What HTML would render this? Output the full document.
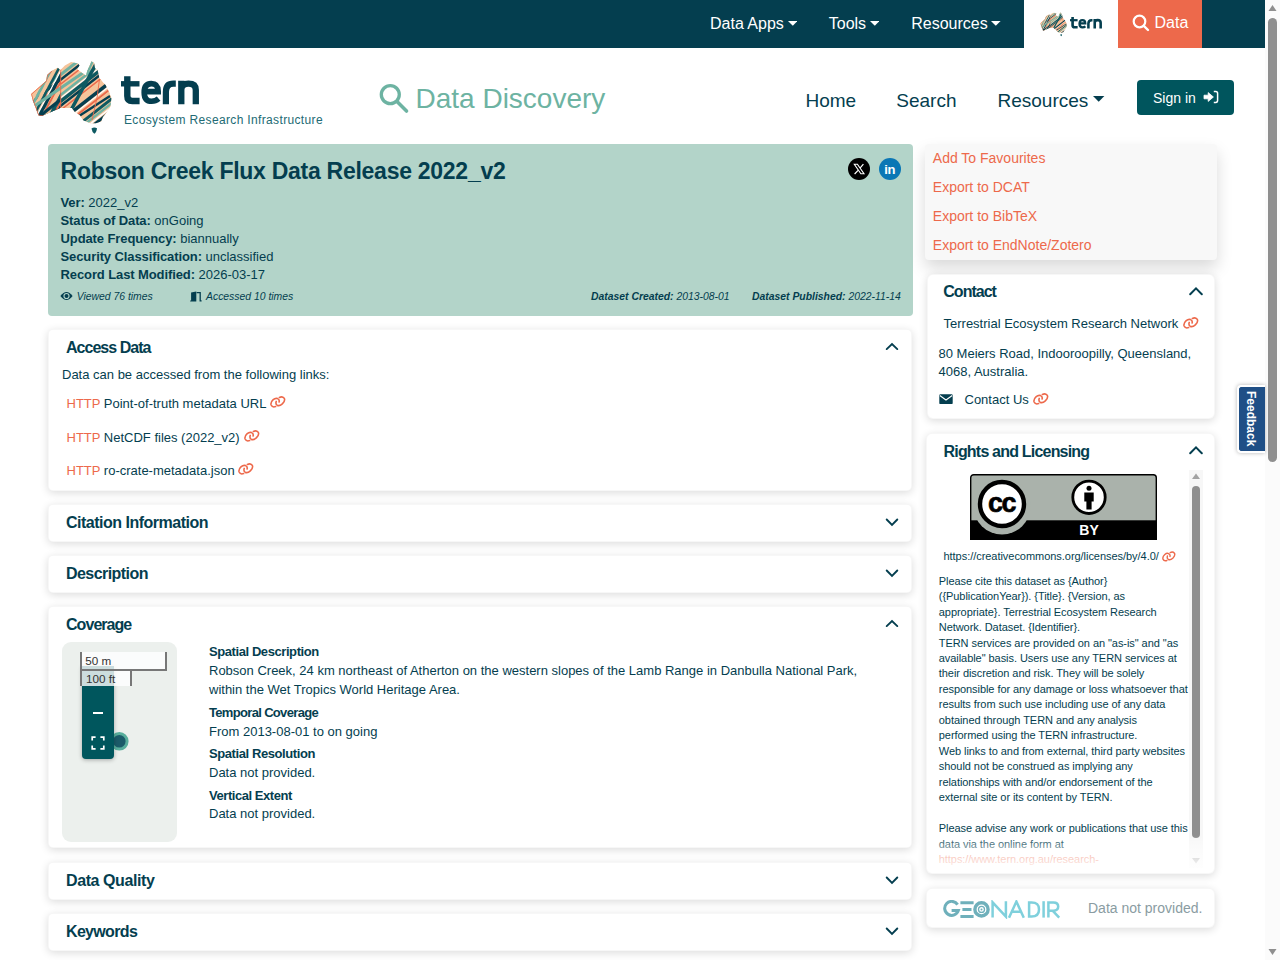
<!DOCTYPE html>
<html><head><meta charset="utf-8"><title>Robson Creek Flux Data Release 2022_v2</title>
<style>
html,body{margin:0;padding:0;width:1280px;height:960px;overflow:hidden;background:#fff;}
body{position:relative;font-family:"Liberation Sans",sans-serif;}
.t{position:absolute;white-space:nowrap;}
.r{position:absolute;display:block;}
</style></head><body>
<div class="r" style="left:0px;top:0px;width:1265px;height:48px;background:#043e4f"></div>
<div class="t" style="left:710.00px;top:16.46px;font-size:16px;line-height:16px;color:#fff;font-weight:400;font-style:normal;letter-spacing:0px;">Data Apps</div>
<svg class="r" style="left:787.5px;top:21.3px;" width="9.6" height="4.8" viewBox="0 0 9.6 4.8"><path d="M0 0H9.6L4.8 4.8Z" fill="#fff"/></svg>
<div class="t" style="left:828.75px;top:16.46px;font-size:16px;line-height:16px;color:#fff;font-weight:400;font-style:normal;letter-spacing:0px;">Tools</div>
<svg class="r" style="left:869.5px;top:21.3px;" width="9.6" height="4.8" viewBox="0 0 9.6 4.8"><path d="M0 0H9.6L4.8 4.8Z" fill="#fff"/></svg>
<div class="t" style="left:911.25px;top:16.46px;font-size:16px;line-height:16px;color:#fff;font-weight:400;font-style:normal;letter-spacing:0px;">Resources</div>
<svg class="r" style="left:991.25px;top:21.3px;" width="9.6" height="4.8" viewBox="0 0 9.6 4.8"><path d="M0 0H9.6L4.8 4.8Z" fill="#fff"/></svg>
<div class="r" style="left:1024px;top:0px;width:94px;height:48px;background:#fff"></div>
<div class="r" style="left:1118px;top:0px;width:84px;height:48px;background:#ed694b"></div>
<svg class="r" style="left:1132px;top:14px;" width="18" height="18" viewBox="0 0 18 18"><circle cx="7.5" cy="7.5" r="5.8" fill="none" stroke="#fff" stroke-width="2.2"/><line x1="11.8" y1="11.8" x2="16" y2="16" stroke="#fff" stroke-width="2.4" stroke-linecap="round"/></svg>
<div class="t" style="left:1154.50px;top:15.06px;font-size:16px;line-height:16px;color:#fff;font-weight:400;font-style:normal;letter-spacing:0px;">Data</div>
<div class="r" style="left:1265px;top:0px;width:15px;height:960px;background:#fbfbfb"></div>
<svg class="r" style="left:1265px;top:0px;" width="15" height="16" viewBox="0 0 15 16"><path d="M3.5 11L7.5 5L11.5 11Z" fill="#8f8f8f"/></svg>
<div class="r" style="left:1268px;top:18px;width:9px;height:444px;background:#8f8f8f;border-radius:4.5px"></div>
<svg class="r" style="left:1265px;top:944px;" width="15" height="16" viewBox="0 0 15 16"><path d="M3.5 5L7.5 11L11.5 5Z" fill="#8f8f8f"/></svg>
<svg class="r" style="left:120.5px;top:76px;" width="80" height="30" viewBox="0 0 80 30"><g fill="none" stroke="#043e4f" stroke-linecap="butt"><path d="M6.3 0.2V20Q6.3 25 11.3 25H18.6" stroke-width="6.4"/><path d="M0 7.8H18.5" stroke-width="5.4"/><path d="M23.5 15.6H37.2Q37.2 7.6 30.2 7.6Q23.2 7.6 23.2 16.4Q23.2 25.2 30.6 25.2Q34.6 25.2 37.6 22.6" stroke-width="5.6"/><path d="M44.9 28.2V16Q44.9 7.7 52.4 7.7H54.8" stroke-width="6.2"/><path d="M60.3 28.2V4.8M60.3 14Q60.3 7.7 67.5 7.7Q74.8 7.7 74.8 14V28.2" stroke-width="6.3"/></g></svg>
<div class="t" style="left:124.00px;top:113.84px;font-size:12px;line-height:12px;color:#226b74;font-weight:400;font-style:normal;letter-spacing:0.35px;">Ecosystem Research Infrastructure</div>
<svg class="r" style="left:376.5px;top:80.5px;" width="34" height="34" viewBox="0 0 34 34"><circle cx="13.3" cy="13.6" r="9" fill="none" stroke="#6db3a2" stroke-width="3.3"/><line x1="20" y1="20.5" x2="29.5" y2="30" stroke="#6db3a2" stroke-width="3.6" stroke-linecap="round"/></svg>
<div class="t" style="left:415.50px;top:84.80px;font-size:28px;line-height:28px;color:#6db3a2;font-weight:400;font-style:normal;letter-spacing:0px;">Data Discovery</div>
<div class="t" style="left:805.50px;top:90.72px;font-size:19px;line-height:19px;color:#043e4f;font-weight:400;font-style:normal;letter-spacing:0px;">Home</div>
<div class="t" style="left:896.30px;top:90.72px;font-size:19px;line-height:19px;color:#043e4f;font-weight:400;font-style:normal;letter-spacing:0px;">Search</div>
<div class="t" style="left:997.50px;top:90.72px;font-size:19px;line-height:19px;color:#043e4f;font-weight:400;font-style:normal;letter-spacing:0px;">Resources</div>
<svg class="r" style="left:1093.3px;top:96px;" width="11.4" height="5.7" viewBox="0 0 11.4 5.7"><path d="M0 0H11.4L5.7 5.7Z" fill="#043e4f"/></svg>
<div class="r" style="left:1137px;top:80px;width:97px;height:35px;background:#00555d;border-radius:4px"></div>
<div class="t" style="left:1153.00px;top:90.55px;font-size:14px;line-height:14px;color:#fff;font-weight:400;font-style:normal;letter-spacing:0px;">Sign in</div>
<svg class="r" style="left:1203px;top:90px;" width="16" height="14" viewBox="0 0 16 14"><path d="M1 5.2H5.2V2.6L10.4 7L5.2 11.4V8.8H1Z" fill="#fff" stroke="#fff" stroke-width="0.8" stroke-linejoin="round"/><path d="M10.8 1.6H12.8Q14.6 1.6 14.6 3.4V10.6Q14.6 12.4 12.8 12.4H10.8" fill="none" stroke="#fff" stroke-width="1.5"/></svg>
<div class="r" style="left:48px;top:144px;width:865px;height:172px;background:#b3d4c9;border-radius:4px"></div>
<div class="t" style="left:60.60px;top:159.53px;font-size:23px;line-height:23px;color:#043e4f;font-weight:700;font-style:normal;letter-spacing:-0.27px;">Robson Creek Flux Data Release 2022_v2</div>
<div class="r" style="left:848px;top:158px;width:22px;height:22px;background:#000;border-radius:50%"></div>
<div class="r" style="left:879px;top:158px;width:22px;height:22px;background:#0a77b5;border-radius:50%"></div>
<svg class="r" style="left:848px;top:158px;" width="22" height="22" viewBox="0 0 22 22"><path d="M6.3 6.2H9.4L16 15.8H12.9Z" fill="none" stroke="#fff" stroke-width="1.1"/><path d="M15.4 6.2L12.2 9.9M10.1 12.3L6.6 16" stroke="#fff" stroke-width="1.2"/></svg>
<div class="t" style="left:884.20px;top:162.80px;font-size:13px;line-height:13px;color:#fff;font-weight:700;font-style:normal;letter-spacing:-0.2px;">in</div>
<div class="t" style="left:60.50px;top:196.00px;font-size:13px;line-height:13px;color:#043e4f;font-weight:400;font-style:normal;letter-spacing:0px;"><b style="letter-spacing:-0.1px">Ver:</b> 2022_v2</div>
<div class="t" style="left:60.50px;top:214.00px;font-size:13px;line-height:13px;color:#043e4f;font-weight:400;font-style:normal;letter-spacing:0px;"><b style="letter-spacing:-0.1px">Status of Data:</b> onGoing</div>
<div class="t" style="left:60.50px;top:232.00px;font-size:13px;line-height:13px;color:#043e4f;font-weight:400;font-style:normal;letter-spacing:0px;"><b style="letter-spacing:-0.1px">Update Frequency:</b> biannually</div>
<div class="t" style="left:60.50px;top:250.00px;font-size:13px;line-height:13px;color:#043e4f;font-weight:400;font-style:normal;letter-spacing:0px;"><b style="letter-spacing:-0.1px">Security Classification:</b> unclassified</div>
<div class="t" style="left:60.50px;top:268.00px;font-size:13px;line-height:13px;color:#043e4f;font-weight:400;font-style:normal;letter-spacing:0px;"><b style="letter-spacing:-0.1px">Record Last Modified:</b> 2026-03-17</div>
<div class="t" style="left:76.70px;top:291.50px;font-size:10.4px;line-height:10.4px;color:#043e4f;font-weight:400;font-style:italic;letter-spacing:0px;">Viewed 76 times</div>
<svg class="r" style="left:59.5px;top:291px;" width="13" height="10" viewBox="0 0 13 10"><path d="M0.4 5Q6.5 -3.2 12.6 5Q6.5 13.2 0.4 5Z" fill="#043e4f"/><circle cx="6.5" cy="5" r="3.1" fill="#b3d4c9"/><circle cx="6.5" cy="5.1" r="2" fill="#043e4f"/></svg>
<svg class="r" style="left:190px;top:290.5px;" width="12" height="11" viewBox="0 0 12 11"><path d="M0.2 10.4H6.3V0.6L1.1 1.6V9.6H0.2Z" fill="#043e4f"/><path d="M6.6 1.6H10.2V9.8H11.6" fill="none" stroke="#043e4f" stroke-width="1.3"/></svg>
<div class="t" style="left:206.00px;top:291.50px;font-size:10.4px;line-height:10.4px;color:#043e4f;font-weight:400;font-style:italic;letter-spacing:0px;">Accessed 10 times</div>
<div class="t" style="left:591.00px;top:291.70px;font-size:10.4px;line-height:10.4px;color:#043e4f;font-weight:400;font-style:italic;letter-spacing:0px;"><b>Dataset Created:</b> 2013-08-01</div>
<div class="t" style="left:752.00px;top:291.70px;font-size:10.4px;line-height:10.4px;color:#043e4f;font-weight:400;font-style:italic;letter-spacing:0px;"><b>Dataset Published:</b> 2022-11-14</div>
<div class="r" style="left:48px;top:329px;width:864px;height:162px;background:#fff;border-radius:5px;border:1px solid rgba(0,0,0,0.03);box-sizing:border-box;box-shadow:0 2px 8px rgba(0,0,0,0.14)"></div>
<div class="t" style="left:66.00px;top:339.76px;font-size:16px;line-height:16px;color:#043e4f;font-weight:700;font-style:normal;letter-spacing:-0.98px;">Access Data</div>
<svg class="r" style="left:885px;top:340px;" width="14" height="11" viewBox="0 0 14 11"><path d="M1.7 9.1L7 4L12.3 9.1" fill="none" stroke="#043e4f" stroke-width="1.9" stroke-linecap="round"/></svg>
<div class="r" style="left:48px;top:504px;width:864px;height:38px;background:#fff;border-radius:5px;border:1px solid rgba(0,0,0,0.03);box-sizing:border-box;box-shadow:0 2px 8px rgba(0,0,0,0.14)"></div>
<div class="t" style="left:66.00px;top:514.76px;font-size:16px;line-height:16px;color:#043e4f;font-weight:700;font-style:normal;letter-spacing:-0.5px;">Citation Information</div>
<svg class="r" style="left:885px;top:517px;" width="14" height="10" viewBox="0 0 14 10"><path d="M1.7 2.5L7 7.8L12.3 2.5" fill="none" stroke="#043e4f" stroke-width="1.9" stroke-linecap="round"/></svg>
<div class="r" style="left:48px;top:555px;width:864px;height:38px;background:#fff;border-radius:5px;border:1px solid rgba(0,0,0,0.03);box-sizing:border-box;box-shadow:0 2px 8px rgba(0,0,0,0.14)"></div>
<div class="t" style="left:66.00px;top:565.76px;font-size:16px;line-height:16px;color:#043e4f;font-weight:700;font-style:normal;letter-spacing:-0.55px;">Description</div>
<svg class="r" style="left:885px;top:568px;" width="14" height="10" viewBox="0 0 14 10"><path d="M1.7 2.5L7 7.8L12.3 2.5" fill="none" stroke="#043e4f" stroke-width="1.9" stroke-linecap="round"/></svg>
<div class="r" style="left:48px;top:606px;width:864px;height:242px;background:#fff;border-radius:5px;border:1px solid rgba(0,0,0,0.03);box-sizing:border-box;box-shadow:0 2px 8px rgba(0,0,0,0.14)"></div>
<div class="t" style="left:66.00px;top:616.76px;font-size:16px;line-height:16px;color:#043e4f;font-weight:700;font-style:normal;letter-spacing:-0.95px;">Coverage</div>
<svg class="r" style="left:885px;top:617px;" width="14" height="11" viewBox="0 0 14 11"><path d="M1.7 9.1L7 4L12.3 9.1" fill="none" stroke="#043e4f" stroke-width="1.9" stroke-linecap="round"/></svg>
<div class="r" style="left:48px;top:862px;width:864px;height:38px;background:#fff;border-radius:5px;border:1px solid rgba(0,0,0,0.03);box-sizing:border-box;box-shadow:0 2px 8px rgba(0,0,0,0.14)"></div>
<div class="t" style="left:66.00px;top:872.76px;font-size:16px;line-height:16px;color:#043e4f;font-weight:700;font-style:normal;letter-spacing:-0.41px;">Data Quality</div>
<svg class="r" style="left:885px;top:875px;" width="14" height="10" viewBox="0 0 14 10"><path d="M1.7 2.5L7 7.8L12.3 2.5" fill="none" stroke="#043e4f" stroke-width="1.9" stroke-linecap="round"/></svg>
<div class="r" style="left:48px;top:913px;width:864px;height:38px;background:#fff;border-radius:5px;border:1px solid rgba(0,0,0,0.03);box-sizing:border-box;box-shadow:0 2px 8px rgba(0,0,0,0.14)"></div>
<div class="t" style="left:66.00px;top:923.76px;font-size:16px;line-height:16px;color:#043e4f;font-weight:700;font-style:normal;letter-spacing:-0.67px;">Keywords</div>
<svg class="r" style="left:885px;top:926px;" width="14" height="10" viewBox="0 0 14 10"><path d="M1.7 2.5L7 7.8L12.3 2.5" fill="none" stroke="#043e4f" stroke-width="1.9" stroke-linecap="round"/></svg>
<div class="t" style="left:62.00px;top:368.00px;font-size:13px;line-height:13px;color:#043e4f;font-weight:400;font-style:normal;letter-spacing:0px;">Data can be accessed from the following links:</div>
<div class="t" style="left:66.50px;top:397.30px;font-size:13px;line-height:13px;color:#043e4f;font-weight:400;font-style:normal;letter-spacing:0px;"><span style="color:#ed694b">HTTP</span> Point-of-truth metadata URL</div>
<div class="t" style="left:66.50px;top:430.50px;font-size:13px;line-height:13px;color:#043e4f;font-weight:400;font-style:normal;letter-spacing:0px;"><span style="color:#ed694b">HTTP</span> NetCDF files (2022_v2)</div>
<div class="t" style="left:66.50px;top:463.70px;font-size:13px;line-height:13px;color:#043e4f;font-weight:400;font-style:normal;letter-spacing:0px;"><span style="color:#ed694b">HTTP</span> ro-crate-metadata.json</div>
<div class="r" style="left:62px;top:642px;width:115px;height:200px;background:#ecf0ed;border-radius:9px"></div>
<div class="t" style="left:209.00px;top:645.00px;font-size:13px;line-height:13px;color:#043e4f;font-weight:700;font-style:normal;letter-spacing:-0.42px;">Spatial Description</div>
<div class="t" style="left:209.00px;top:664.00px;font-size:13px;line-height:13px;color:#043e4f;font-weight:400;font-style:normal;letter-spacing:0px;">Robson Creek, 24 km northeast of Atherton on the western slopes of the Lamb Range in Danbulla National Park,</div>
<div class="t" style="left:209.00px;top:683.00px;font-size:13px;line-height:13px;color:#043e4f;font-weight:400;font-style:normal;letter-spacing:0px;">within the Wet Tropics World Heritage Area.</div>
<div class="t" style="left:209.00px;top:705.50px;font-size:13px;line-height:13px;color:#043e4f;font-weight:700;font-style:normal;letter-spacing:-0.67px;">Temporal Coverage</div>
<div class="t" style="left:209.00px;top:724.50px;font-size:13px;line-height:13px;color:#043e4f;font-weight:400;font-style:normal;letter-spacing:0px;">From 2013-08-01 to on going</div>
<div class="t" style="left:209.00px;top:746.50px;font-size:13px;line-height:13px;color:#043e4f;font-weight:700;font-style:normal;letter-spacing:-0.41px;">Spatial Resolution</div>
<div class="t" style="left:209.00px;top:766.00px;font-size:13px;line-height:13px;color:#043e4f;font-weight:400;font-style:normal;letter-spacing:0px;">Data not provided.</div>
<div class="t" style="left:209.00px;top:788.50px;font-size:13px;line-height:13px;color:#043e4f;font-weight:700;font-style:normal;letter-spacing:-0.45px;">Vertical Extent</div>
<div class="t" style="left:209.00px;top:807.00px;font-size:13px;line-height:13px;color:#043e4f;font-weight:400;font-style:normal;letter-spacing:0px;">Data not provided.</div>
<div class="r" style="left:925px;top:144px;width:292px;height:116px;background:#f8f8f8;border-radius:4px;box-shadow:0 8px 16px rgba(0,0,0,0.15)"></div>
<div class="t" style="left:932.80px;top:151.15px;font-size:14px;line-height:14px;color:#ed694b;font-weight:400;font-style:normal;letter-spacing:0px;">Add To Favourites</div>
<div class="t" style="left:932.80px;top:180.15px;font-size:14px;line-height:14px;color:#ed694b;font-weight:400;font-style:normal;letter-spacing:0px;">Export to DCAT</div>
<div class="t" style="left:932.80px;top:209.15px;font-size:14px;line-height:14px;color:#ed694b;font-weight:400;font-style:normal;letter-spacing:0px;">Export to BibTeX</div>
<div class="t" style="left:932.80px;top:238.15px;font-size:14px;line-height:14px;color:#ed694b;font-weight:400;font-style:normal;letter-spacing:0px;">Export to EndNote/Zotero</div>
<div class="r" style="left:927px;top:274px;width:288px;height:145px;background:#fff;border-radius:6px;border:1px solid rgba(0,0,0,0.03);box-sizing:border-box;box-shadow:0 2px 8px rgba(0,0,0,0.14)"></div>
<div class="t" style="left:943.30px;top:283.86px;font-size:16px;line-height:16px;color:#043e4f;font-weight:700;font-style:normal;letter-spacing:-1.0px;">Contact</div>
<svg class="r" style="left:1189px;top:285.5px;" width="14" height="10" viewBox="0 0 14 10"><path d="M1.2 8.2L7 2.4L12.8 8.2" fill="none" stroke="#043e4f" stroke-width="2" stroke-linecap="round"/></svg>
<div class="t" style="left:943.50px;top:317.00px;font-size:13px;line-height:13px;color:#043e4f;font-weight:400;font-style:normal;letter-spacing:0px;">Terrestrial Ecosystem Research Network</div>
<div class="t" style="left:938.50px;top:346.80px;font-size:13px;line-height:13px;color:#043e4f;font-weight:400;font-style:normal;letter-spacing:0px;">80 Meiers Road, Indooroopilly, Queensland,</div>
<div class="t" style="left:938.50px;top:364.80px;font-size:13px;line-height:13px;color:#043e4f;font-weight:400;font-style:normal;letter-spacing:0px;">4068, Australia.</div>
<div class="t" style="left:964.50px;top:393.00px;font-size:13px;line-height:13px;color:#043e4f;font-weight:400;font-style:normal;letter-spacing:0px;">Contact Us</div>
<div class="r" style="left:926px;top:433px;width:289px;height:441px;background:#fff;border-radius:6px;border:1px solid rgba(0,0,0,0.03);box-sizing:border-box;box-shadow:0 2px 8px rgba(0,0,0,0.14)"></div>
<div class="t" style="left:943.50px;top:444.46px;font-size:16px;line-height:16px;color:#043e4f;font-weight:700;font-style:normal;letter-spacing:-0.8px;">Rights and Licensing</div>
<svg class="r" style="left:1189px;top:445.3px;" width="14" height="10" viewBox="0 0 14 10"><path d="M1.2 8.2L7 2.4L12.8 8.2" fill="none" stroke="#043e4f" stroke-width="2" stroke-linecap="round"/></svg>
<div class="t" style="left:943.50px;top:551.49px;font-size:11px;line-height:11px;color:#043e4f;font-weight:400;font-style:normal;letter-spacing:-0.04px;">https://creativecommons.org/licenses/by/4.0/</div>
<div class="t" style="left:938.80px;top:575.59px;font-size:11px;line-height:11px;color:#043e4f;font-weight:400;font-style:normal;letter-spacing:-0.06px;">Please cite this dataset as {Author}</div>
<div class="t" style="left:938.80px;top:591.07px;font-size:11px;line-height:11px;color:#043e4f;font-weight:400;font-style:normal;letter-spacing:-0.06px;">({PublicationYear}). {Title}. {Version, as</div>
<div class="t" style="left:938.80px;top:606.55px;font-size:11px;line-height:11px;color:#043e4f;font-weight:400;font-style:normal;letter-spacing:-0.06px;">appropriate}. Terrestrial Ecosystem Research</div>
<div class="t" style="left:938.80px;top:622.03px;font-size:11px;line-height:11px;color:#043e4f;font-weight:400;font-style:normal;letter-spacing:-0.06px;">Network. Dataset. {Identifier}.</div>
<div class="t" style="left:938.80px;top:637.51px;font-size:11px;line-height:11px;color:#043e4f;font-weight:400;font-style:normal;letter-spacing:-0.06px;">TERN services are provided on an &quot;as-is&quot; and &quot;as</div>
<div class="t" style="left:938.80px;top:652.99px;font-size:11px;line-height:11px;color:#043e4f;font-weight:400;font-style:normal;letter-spacing:-0.06px;">available&quot; basis. Users use any TERN services at</div>
<div class="t" style="left:938.80px;top:668.47px;font-size:11px;line-height:11px;color:#043e4f;font-weight:400;font-style:normal;letter-spacing:-0.06px;">their discretion and risk. They will be solely</div>
<div class="t" style="left:938.80px;top:683.95px;font-size:11px;line-height:11px;color:#043e4f;font-weight:400;font-style:normal;letter-spacing:-0.06px;">responsible for any damage or loss whatsoever that</div>
<div class="t" style="left:938.80px;top:699.43px;font-size:11px;line-height:11px;color:#043e4f;font-weight:400;font-style:normal;letter-spacing:-0.06px;">results from such use including use of any data</div>
<div class="t" style="left:938.80px;top:714.91px;font-size:11px;line-height:11px;color:#043e4f;font-weight:400;font-style:normal;letter-spacing:-0.06px;">obtained through TERN and any analysis</div>
<div class="t" style="left:938.80px;top:730.39px;font-size:11px;line-height:11px;color:#043e4f;font-weight:400;font-style:normal;letter-spacing:-0.06px;">performed using the TERN infrastructure.</div>
<div class="t" style="left:938.80px;top:745.87px;font-size:11px;line-height:11px;color:#043e4f;font-weight:400;font-style:normal;letter-spacing:-0.06px;">Web links to and from external, third party websites</div>
<div class="t" style="left:938.80px;top:761.35px;font-size:11px;line-height:11px;color:#043e4f;font-weight:400;font-style:normal;letter-spacing:-0.06px;">should not be construed as implying any</div>
<div class="t" style="left:938.80px;top:776.83px;font-size:11px;line-height:11px;color:#043e4f;font-weight:400;font-style:normal;letter-spacing:-0.06px;">relationships with and/or endorsement of the</div>
<div class="t" style="left:938.80px;top:792.31px;font-size:11px;line-height:11px;color:#043e4f;font-weight:400;font-style:normal;letter-spacing:-0.06px;">external site or its content by TERN.</div>
<div class="t" style="left:938.80px;top:823.27px;font-size:11px;line-height:11px;color:#043e4f;font-weight:400;font-style:normal;letter-spacing:-0.06px;">Please advise any work or publications that use this</div>
<div class="t" style="left:938.80px;top:838.75px;font-size:11px;line-height:11px;color:#043e4f;font-weight:400;font-style:normal;letter-spacing:-0.06px;">data via the online form at</div>
<div class="t" style="left:938.80px;top:854.23px;font-size:11px;line-height:11px;color:#ed694b;font-weight:400;font-style:normal;letter-spacing:-0.06px;">https://www.tern.org.au/research-</div>
<div class="r" style="left:926px;top:888px;width:289px;height:40px;background:#fff;border-radius:6px;border:1px solid rgba(0,0,0,0.03);box-sizing:border-box;box-shadow:0 2px 8px rgba(0,0,0,0.14)"></div>
<div class="t" style="left:1088.00px;top:900.85px;font-size:14px;line-height:14px;color:#8a9ca2;font-weight:400;font-style:normal;letter-spacing:0px;">Data not provided.</div>
<div class="r" style="left:1237px;top:384.5px;width:28px;height:68px;background:#1f4f86;border:2px solid #fff;border-right:none;border-radius:4px 0 0 4px;box-sizing:border-box;box-shadow:0 0 4px rgba(0,0,0,0.3)"></div>
<div class="t" style="left:1243px;top:391px;width:16px;font-size:12px;line-height:16px;font-weight:700;color:#fff;writing-mode:vertical-rl;">Feedback</div>
<svg class="r" style="left:30px;top:60px;" width="82" height="76" viewBox="0 0 82 76"><defs><clipPath id="aubig"><path d="M1.2 34.0 L16.3 20.7 L17.1 14.9 L21.6 10.9 L27.8 7.8 L30.4 10.1 L34.9 5.6 L41.1 2.1 L48.1 3.4 L49.5 5.6 L47.3 9.2 L51.7 12.7 L56.1 15.4 L57.0 11.8 L59.7 5.6 L61.4 1.2 L64.1 3.0 L65.0 8.3 L67.6 10.1 L69.4 18.0 L72.9 22.5 L75.6 25.1 L79.1 32.2 L81.4 38.4 L80.5 46.4 L76.5 52.6 L72.9 57.0 L71.2 61.4 L65.9 63.2 L60.5 63.2 L53.5 60.5 L49.9 55.2 L44.6 51.7 L41.9 48.1 L30.4 48.1 L21.6 51.7 L11.8 56.1 L8.3 55.2 L6.5 49.9 L3.0 41.1Z"/></clipPath></defs><g clip-path="url(#aubig)"><rect width="82" height="66" fill="#f5c49b"/><line x1="-21.6" y1="55.5" x2="88.7" y2="-30.7" stroke="#6fb2a2" stroke-width="3"/><line x1="-19.2" y1="58.6" x2="91.2" y2="-27.6" stroke="#053f50" stroke-width="2.5"/><line x1="-17.0" y1="61.4" x2="93.3" y2="-24.8" stroke="#ec6a4b" stroke-width="1.5"/><line x1="-14.2" y1="64.9" x2="96.1" y2="-21.3" stroke="#f5c49b" stroke-width="5"/><line x1="-11.8" y1="68.1" x2="98.5" y2="-18.1" stroke="#6fb2a2" stroke-width="2.5"/><line x1="-10.2" y1="70.0" x2="100.1" y2="-16.2" stroke="#ffffff" stroke-width="1.2"/><line x1="-8.7" y1="72.0" x2="101.6" y2="-14.2" stroke="#0e5a62" stroke-width="3.5"/><line x1="-6.5" y1="74.8" x2="103.8" y2="-11.4" stroke="#053f50" stroke-width="2.5"/><line x1="-4.4" y1="77.5" x2="105.9" y2="-8.7" stroke="#ec6a4b" stroke-width="1.5"/><line x1="-1.9" y1="80.7" x2="108.4" y2="-5.5" stroke="#f5c49b" stroke-width="6"/><line x1="0.8" y1="84.2" x2="111.2" y2="-2.0" stroke="#053f50" stroke-width="3.5"/><line x1="2.5" y1="86.3" x2="112.8" y2="0.2" stroke="#ffffff" stroke-width="1.2"/><line x1="4.2" y1="88.6" x2="114.5" y2="2.4" stroke="#ec6a4b" stroke-width="2"/><line x1="6.7" y1="91.7" x2="117.0" y2="5.5" stroke="#f5c49b" stroke-width="6"/><line x1="9.5" y1="95.3" x2="119.8" y2="9.1" stroke="#0e5a62" stroke-width="3"/><line x1="11.6" y1="98.0" x2="121.9" y2="11.8" stroke="#6fb2a2" stroke-width="2.5"/><line x1="13.5" y1="100.4" x2="123.8" y2="14.2" stroke="#ffffff" stroke-width="1.5"/><line x1="15.3" y1="102.7" x2="125.6" y2="16.5" stroke="#053f50" stroke-width="3"/><line x1="17.8" y1="105.9" x2="128.1" y2="19.7" stroke="#6fb2a2" stroke-width="3"/><clipPath id="wbig"><rect x="0" y="0" width="31" height="76"/></clipPath><g clip-path="url(#wbig)"><line x1="-29.0" y1="86.3" x2="36.7" y2="-37.3" stroke="#ec6a4b" stroke-width="2"/><line x1="-25.5" y1="88.2" x2="40.3" y2="-35.4" stroke="#f5c49b" stroke-width="6"/><line x1="-21.5" y1="90.3" x2="44.2" y2="-33.3" stroke="#6fb2a2" stroke-width="2.5"/><line x1="-18.8" y1="91.7" x2="46.9" y2="-31.9" stroke="#f5c49b" stroke-width="3.5"/><line x1="-16.2" y1="93.1" x2="49.5" y2="-30.5" stroke="#0e5a62" stroke-width="2.5"/><line x1="-13.8" y1="94.4" x2="51.9" y2="-29.2" stroke="#ffffff" stroke-width="1.2"/><line x1="-11.8" y1="95.4" x2="54.0" y2="-28.2" stroke="#053f50" stroke-width="3"/><line x1="-9.1" y1="96.9" x2="56.6" y2="-26.8" stroke="#ec6a4b" stroke-width="2"/><line x1="-6.5" y1="98.3" x2="59.3" y2="-25.3" stroke="#f5c49b" stroke-width="4"/><line x1="-3.4" y1="99.9" x2="62.3" y2="-23.7" stroke="#0e5a62" stroke-width="3"/><line x1="-0.7" y1="101.3" x2="65.0" y2="-22.3" stroke="#ec6a4b" stroke-width="2"/><line x1="1.9" y1="102.7" x2="67.6" y2="-20.9" stroke="#053f50" stroke-width="4"/></g><line x1="3" y1="47" x2="60" y2="8" stroke="#6fb2a2" stroke-width="3.2"/><line x1="40" y1="52" x2="66" y2="4" stroke="#0e5a62" stroke-width="3.6"/><line x1="56" y1="14" x2="63" y2="0" stroke="#6fb2a2" stroke-width="3"/><line x1="46" y1="58" x2="80" y2="36" stroke="#053f50" stroke-width="2.4"/><line x1="10" y1="56" x2="30" y2="40" stroke="#053f50" stroke-width="3"/><path d="M30.7 9V49" stroke="#ec6a4b" stroke-width="0.9" fill="none"/><path d="M69.5 19L67 38L62 60" stroke="#ec6a4b" stroke-width="0.9" fill="none"/><path d="M1.2 34.0 L16.3 20.7 L17.1 14.9 L21.6 10.9 L27.8 7.8 L30.4 10.1 L34.9 5.6 L41.1 2.1 L48.1 3.4 L49.5 5.6 L47.3 9.2 L51.7 12.7 L56.1 15.4 L57.0 11.8 L59.7 5.6 L61.4 1.2 L64.1 3.0 L65.0 8.3 L67.6 10.1 L69.4 18.0 L72.9 22.5 L75.6 25.1 L79.1 32.2 L81.4 38.4 L80.5 46.4 L76.5 52.6 L72.9 57.0 L71.2 61.4 L65.9 63.2 L60.5 63.2 L53.5 60.5 L49.9 55.2 L44.6 51.7 L41.9 48.1 L30.4 48.1 L21.6 51.7 L11.8 56.1 L8.3 55.2 L6.5 49.9 L3.0 41.1Z" fill="none" stroke="#ec6a4b" stroke-width="1.4" stroke-dasharray="32 200"/></g><path d="M61.5 68.5 Q64 66.8 67 68.2 Q66.5 72.5 64.3 73.8 Q62 72 61.5 68.5Z" fill="#0e5a62"/></svg>
<svg class="r" style="left:1040px;top:11.7px;" width="27" height="25" viewBox="0 0 82 76"><defs><clipPath id="ausmall"><path d="M1.2 34.0 L16.3 20.7 L17.1 14.9 L21.6 10.9 L27.8 7.8 L30.4 10.1 L34.9 5.6 L41.1 2.1 L48.1 3.4 L49.5 5.6 L47.3 9.2 L51.7 12.7 L56.1 15.4 L57.0 11.8 L59.7 5.6 L61.4 1.2 L64.1 3.0 L65.0 8.3 L67.6 10.1 L69.4 18.0 L72.9 22.5 L75.6 25.1 L79.1 32.2 L81.4 38.4 L80.5 46.4 L76.5 52.6 L72.9 57.0 L71.2 61.4 L65.9 63.2 L60.5 63.2 L53.5 60.5 L49.9 55.2 L44.6 51.7 L41.9 48.1 L30.4 48.1 L21.6 51.7 L11.8 56.1 L8.3 55.2 L6.5 49.9 L3.0 41.1Z"/></clipPath></defs><g clip-path="url(#ausmall)"><rect width="82" height="66" fill="#f5c49b"/><line x1="-21.6" y1="55.5" x2="88.7" y2="-30.7" stroke="#6fb2a2" stroke-width="3"/><line x1="-19.2" y1="58.6" x2="91.2" y2="-27.6" stroke="#053f50" stroke-width="2.5"/><line x1="-17.0" y1="61.4" x2="93.3" y2="-24.8" stroke="#ec6a4b" stroke-width="1.5"/><line x1="-14.2" y1="64.9" x2="96.1" y2="-21.3" stroke="#f5c49b" stroke-width="5"/><line x1="-11.8" y1="68.1" x2="98.5" y2="-18.1" stroke="#6fb2a2" stroke-width="2.5"/><line x1="-10.2" y1="70.0" x2="100.1" y2="-16.2" stroke="#ffffff" stroke-width="1.2"/><line x1="-8.7" y1="72.0" x2="101.6" y2="-14.2" stroke="#0e5a62" stroke-width="3.5"/><line x1="-6.5" y1="74.8" x2="103.8" y2="-11.4" stroke="#053f50" stroke-width="2.5"/><line x1="-4.4" y1="77.5" x2="105.9" y2="-8.7" stroke="#ec6a4b" stroke-width="1.5"/><line x1="-1.9" y1="80.7" x2="108.4" y2="-5.5" stroke="#f5c49b" stroke-width="6"/><line x1="0.8" y1="84.2" x2="111.2" y2="-2.0" stroke="#053f50" stroke-width="3.5"/><line x1="2.5" y1="86.3" x2="112.8" y2="0.2" stroke="#ffffff" stroke-width="1.2"/><line x1="4.2" y1="88.6" x2="114.5" y2="2.4" stroke="#ec6a4b" stroke-width="2"/><line x1="6.7" y1="91.7" x2="117.0" y2="5.5" stroke="#f5c49b" stroke-width="6"/><line x1="9.5" y1="95.3" x2="119.8" y2="9.1" stroke="#0e5a62" stroke-width="3"/><line x1="11.6" y1="98.0" x2="121.9" y2="11.8" stroke="#6fb2a2" stroke-width="2.5"/><line x1="13.5" y1="100.4" x2="123.8" y2="14.2" stroke="#ffffff" stroke-width="1.5"/><line x1="15.3" y1="102.7" x2="125.6" y2="16.5" stroke="#053f50" stroke-width="3"/><line x1="17.8" y1="105.9" x2="128.1" y2="19.7" stroke="#6fb2a2" stroke-width="3"/><clipPath id="wsmall"><rect x="0" y="0" width="31" height="76"/></clipPath><g clip-path="url(#wsmall)"><line x1="-29.0" y1="86.3" x2="36.7" y2="-37.3" stroke="#ec6a4b" stroke-width="2"/><line x1="-25.5" y1="88.2" x2="40.3" y2="-35.4" stroke="#f5c49b" stroke-width="6"/><line x1="-21.5" y1="90.3" x2="44.2" y2="-33.3" stroke="#6fb2a2" stroke-width="2.5"/><line x1="-18.8" y1="91.7" x2="46.9" y2="-31.9" stroke="#f5c49b" stroke-width="3.5"/><line x1="-16.2" y1="93.1" x2="49.5" y2="-30.5" stroke="#0e5a62" stroke-width="2.5"/><line x1="-13.8" y1="94.4" x2="51.9" y2="-29.2" stroke="#ffffff" stroke-width="1.2"/><line x1="-11.8" y1="95.4" x2="54.0" y2="-28.2" stroke="#053f50" stroke-width="3"/><line x1="-9.1" y1="96.9" x2="56.6" y2="-26.8" stroke="#ec6a4b" stroke-width="2"/><line x1="-6.5" y1="98.3" x2="59.3" y2="-25.3" stroke="#f5c49b" stroke-width="4"/><line x1="-3.4" y1="99.9" x2="62.3" y2="-23.7" stroke="#0e5a62" stroke-width="3"/><line x1="-0.7" y1="101.3" x2="65.0" y2="-22.3" stroke="#ec6a4b" stroke-width="2"/><line x1="1.9" y1="102.7" x2="67.6" y2="-20.9" stroke="#053f50" stroke-width="4"/></g><line x1="3" y1="47" x2="60" y2="8" stroke="#6fb2a2" stroke-width="3.2"/><line x1="40" y1="52" x2="66" y2="4" stroke="#0e5a62" stroke-width="3.6"/><line x1="56" y1="14" x2="63" y2="0" stroke="#6fb2a2" stroke-width="3"/><line x1="46" y1="58" x2="80" y2="36" stroke="#053f50" stroke-width="2.4"/><line x1="10" y1="56" x2="30" y2="40" stroke="#053f50" stroke-width="3"/><path d="M30.7 9V49" stroke="#ec6a4b" stroke-width="0.9" fill="none"/><path d="M69.5 19L67 38L62 60" stroke="#ec6a4b" stroke-width="0.9" fill="none"/><path d="M1.2 34.0 L16.3 20.7 L17.1 14.9 L21.6 10.9 L27.8 7.8 L30.4 10.1 L34.9 5.6 L41.1 2.1 L48.1 3.4 L49.5 5.6 L47.3 9.2 L51.7 12.7 L56.1 15.4 L57.0 11.8 L59.7 5.6 L61.4 1.2 L64.1 3.0 L65.0 8.3 L67.6 10.1 L69.4 18.0 L72.9 22.5 L75.6 25.1 L79.1 32.2 L81.4 38.4 L80.5 46.4 L76.5 52.6 L72.9 57.0 L71.2 61.4 L65.9 63.2 L60.5 63.2 L53.5 60.5 L49.9 55.2 L44.6 51.7 L41.9 48.1 L30.4 48.1 L21.6 51.7 L11.8 56.1 L8.3 55.2 L6.5 49.9 L3.0 41.1Z" fill="none" stroke="#ec6a4b" stroke-width="1.4" stroke-dasharray="32 200"/></g><path d="M61.5 68.5 Q64 66.8 67 68.2 Q66.5 72.5 64.3 73.8 Q62 72 61.5 68.5Z" fill="#0e5a62"/></svg>
<svg class="r" style="left:1070.2px;top:17.3px;" width="33" height="12.5" viewBox="0 0 80.5 30.5"><g fill="none" stroke="#043e4f" stroke-linecap="butt"><path d="M6.3 0.2V20Q6.3 25 11.3 25H18.6" stroke-width="6.4"/><path d="M0 7.8H18.5" stroke-width="5.4"/><path d="M23.5 15.6H37.2Q37.2 7.6 30.2 7.6Q23.2 7.6 23.2 16.4Q23.2 25.2 30.6 25.2Q34.6 25.2 37.6 22.6" stroke-width="5.6"/><path d="M44.9 28.2V16Q44.9 7.7 52.4 7.7H54.8" stroke-width="6.2"/><path d="M60.3 28.2V4.8M60.3 14Q60.3 7.7 67.5 7.7Q74.8 7.7 74.8 14V28.2" stroke-width="6.3"/></g></svg>
<svg class="r" style="left:270px;top:396.4px;" width="16" height="12" viewBox="0 0 16 12"><g fill="none" stroke="#ed694b" stroke-width="1.6" stroke-linecap="round"><path d="M5.6 10.6Q2.4 11.8 1.1 9Q0.3 6.4 3.2 3.7Q5.5 1.7 7.6 2.6Q9.8 3.8 9.1 5.9"/><path d="M9.4 1.5Q12.2 -0.1 14.2 2.2Q15.6 4.5 12.3 7.9Q9.7 10.3 7.3 9.4Q5.3 8.3 6.2 5.4"/></g></svg>
<svg class="r" style="left:243.8px;top:430px;" width="16" height="12" viewBox="0 0 16 12"><g fill="none" stroke="#ed694b" stroke-width="1.6" stroke-linecap="round"><path d="M5.6 10.6Q2.4 11.8 1.1 9Q0.3 6.4 3.2 3.7Q5.5 1.7 7.6 2.6Q9.8 3.8 9.1 5.9"/><path d="M9.4 1.5Q12.2 -0.1 14.2 2.2Q15.6 4.5 12.3 7.9Q9.7 10.3 7.3 9.4Q5.3 8.3 6.2 5.4"/></g></svg>
<svg class="r" style="left:238.4px;top:463.3px;" width="16" height="12" viewBox="0 0 16 12"><g fill="none" stroke="#ed694b" stroke-width="1.6" stroke-linecap="round"><path d="M5.6 10.6Q2.4 11.8 1.1 9Q0.3 6.4 3.2 3.7Q5.5 1.7 7.6 2.6Q9.8 3.8 9.1 5.9"/><path d="M9.4 1.5Q12.2 -0.1 14.2 2.2Q15.6 4.5 12.3 7.9Q9.7 10.3 7.3 9.4Q5.3 8.3 6.2 5.4"/></g></svg>
<svg class="r" style="left:1182.8px;top:316.9px;" width="16" height="12" viewBox="0 0 16 12"><g fill="none" stroke="#ed694b" stroke-width="1.6" stroke-linecap="round"><path d="M5.6 10.6Q2.4 11.8 1.1 9Q0.3 6.4 3.2 3.7Q5.5 1.7 7.6 2.6Q9.8 3.8 9.1 5.9"/><path d="M9.4 1.5Q12.2 -0.1 14.2 2.2Q15.6 4.5 12.3 7.9Q9.7 10.3 7.3 9.4Q5.3 8.3 6.2 5.4"/></g></svg>
<svg class="r" style="left:1033px;top:393px;" width="16" height="12" viewBox="0 0 16 12"><g fill="none" stroke="#ed694b" stroke-width="1.6" stroke-linecap="round"><path d="M5.6 10.6Q2.4 11.8 1.1 9Q0.3 6.4 3.2 3.7Q5.5 1.7 7.6 2.6Q9.8 3.8 9.1 5.9"/><path d="M9.4 1.5Q12.2 -0.1 14.2 2.2Q15.6 4.5 12.3 7.9Q9.7 10.3 7.3 9.4Q5.3 8.3 6.2 5.4"/></g></svg>
<svg class="r" style="left:1162px;top:550.8px;" width="14" height="11" viewBox="0 0 16 12"><g fill="none" stroke="#ed694b" stroke-width="1.6" stroke-linecap="round"><path d="M5.6 10.6Q2.4 11.8 1.1 9Q0.3 6.4 3.2 3.7Q5.5 1.7 7.6 2.6Q9.8 3.8 9.1 5.9"/><path d="M9.4 1.5Q12.2 -0.1 14.2 2.2Q15.6 4.5 12.3 7.9Q9.7 10.3 7.3 9.4Q5.3 8.3 6.2 5.4"/></g></svg>
<svg class="r" style="left:938.5px;top:393.5px;" width="14" height="10.5" viewBox="0 0 14 10.5"><rect x="0.3" y="0.3" width="13.4" height="9.9" rx="1.2" fill="#043e4f"/><path d="M0.8 1.5L7 6L13.2 1.5" fill="none" stroke="#fff" stroke-width="1.1"/></svg>
<svg class="r" style="left:970px;top:474px;" width="187" height="66" viewBox="0 0 187 66"><rect x="0.7" y="0.7" width="185.6" height="64.6" rx="3" fill="#aab2ab" stroke="#000" stroke-width="1.4"/>
<rect x="0" y="46.3" width="187" height="19.7" fill="#000"/>
<circle cx="32" cy="32" r="28.5" fill="#aab2ab"/>
<circle cx="32" cy="30" r="22" fill="#fff" stroke="#000" stroke-width="4.4"/>
<text x="31.5" y="38" text-anchor="middle" font-family="Liberation Sans" font-weight="700" font-size="27" letter-spacing="-1.6" fill="#000" stroke="#000" stroke-width="0.6">cc</text>
<circle cx="119" cy="23.3" r="16.2" fill="#fff" stroke="#000" stroke-width="2.8"/>
<circle cx="119" cy="14.3" r="2.5" fill="#000"/>
<path d="M114.3 18.5H123.7V27.5H121.6V35.5H116.4V27.5H114.3Z" fill="#000"/>
<text x="119" y="60.8" text-anchor="middle" font-family="Liberation Sans" font-weight="700" font-size="14" fill="#fff">BY</text></svg>
<div class="r" style="left:1188.5px;top:470px;width:14px;height:398px;background:#f7f7f7"></div>
<svg class="r" style="left:1188.5px;top:470px;" width="14" height="12" viewBox="0 0 14 12"><path d="M3 9L7 3.5L11 9Z" fill="#a3a3a3"/></svg>
<div class="r" style="left:1191.5px;top:486px;width:8.5px;height:352px;background:#8f8f8f;border-radius:4.25px"></div>
<svg class="r" style="left:1188.5px;top:855px;" width="14" height="12" viewBox="0 0 14 12"><path d="M3 3L7 8.5L11 3Z" fill="#a3a3a3"/></svg>
<div class="r" style="left:936px;top:836px;width:268px;height:34px;background:linear-gradient(rgba(255,255,255,0) 0%,rgba(255,255,255,0.45) 35%,rgba(255,255,255,0.82) 85%)"></div>
<svg class="r" style="left:942px;top:900px;" width="120" height="19" viewBox="0 0 120 19"><g fill="none" stroke="#6fb0bb" stroke-width="3">
<path d="M15.6 4.6A7 7 0 1 0 16.4 10.4H9.6"/>
<path d="M18.4 2.7H31.6M20.4 9.6H29.5M18.4 16.4H31.6"/>
<circle cx="39.5" cy="9.4" r="6.6" stroke-width="3.4"/></g>
<circle cx="39.5" cy="9.4" r="3" fill="none" stroke="#6fb0bb" stroke-width="1.3"/>
<circle cx="39.5" cy="9.4" r="1" fill="#6fb0bb"/>
<g fill="none" stroke="#7fd0dc" stroke-width="2.5">
<path d="M50.6 17.6V2.3L63.9 16.6V1.2"/>
<path d="M67 17.8L74.4 1.6L81.8 17.8M70 11.8H78.8"/>
<path d="M87.1 2.4V16.4H89.6Q97 16.4 97 9.4Q97 2.4 89.6 2.4Z"/>
<path d="M101.6 1.2V17.6"/>
<path d="M106.4 17.6V2.4H111.4Q116.2 2.4 116.2 6.6Q116.2 10.8 111.4 10.8H106.4M110.8 10.8L117.2 17.6"/></g></svg>
<svg class="r" style="left:109px;top:731px;" width="21" height="21" viewBox="0 0 21 21"><circle cx="10.3" cy="10.3" r="7.8" fill="#1b5b69" stroke="#58ae9c" stroke-width="3"/></svg>
<div class="r" style="left:82px;top:666px;width:32px;height:93px;background:#00565d;border-radius:0 0 4px 4px;box-shadow:0 1px 4px rgba(0,0,0,0.3)"></div>
<div class="r" style="left:80px;top:652px;width:87px;height:18px;background:rgba(255,255,255,0.8)"></div>
<div class="r" style="left:80px;top:670px;width:51px;height:16px;background:rgba(255,255,255,0.8)"></div>
<div class="r" style="left:79.5px;top:652px;width:2px;height:34px;background:#777"></div>
<div class="r" style="left:80px;top:668.5px;width:87px;height:2px;background:#777"></div>
<div class="r" style="left:165px;top:652px;width:2px;height:18px;background:#777"></div>
<div class="r" style="left:130px;top:670px;width:2px;height:16px;background:#777"></div>
<div class="t" style="left:85.30px;top:655.10px;font-size:11.7px;line-height:11.7px;color:#333;font-weight:400;font-style:normal;letter-spacing:0px;">50 m</div>
<div class="t" style="left:86.00px;top:673.40px;font-size:11.7px;line-height:11.7px;color:#333;font-weight:400;font-style:normal;letter-spacing:0px;">100 ft</div>
<div class="r" style="left:93px;top:711.5px;width:10px;height:2px;background:#fff"></div>
<svg class="r" style="left:91px;top:736px;" width="14" height="14" viewBox="0 0 14 14"><path d="M1.2 4.6V1.2H4.6M9.4 1.2H12.8V4.6M12.8 9.4V12.8H9.4M4.6 12.8H1.2V9.4" fill="none" stroke="#fff" stroke-width="1.7"/></svg>
</body></html>
